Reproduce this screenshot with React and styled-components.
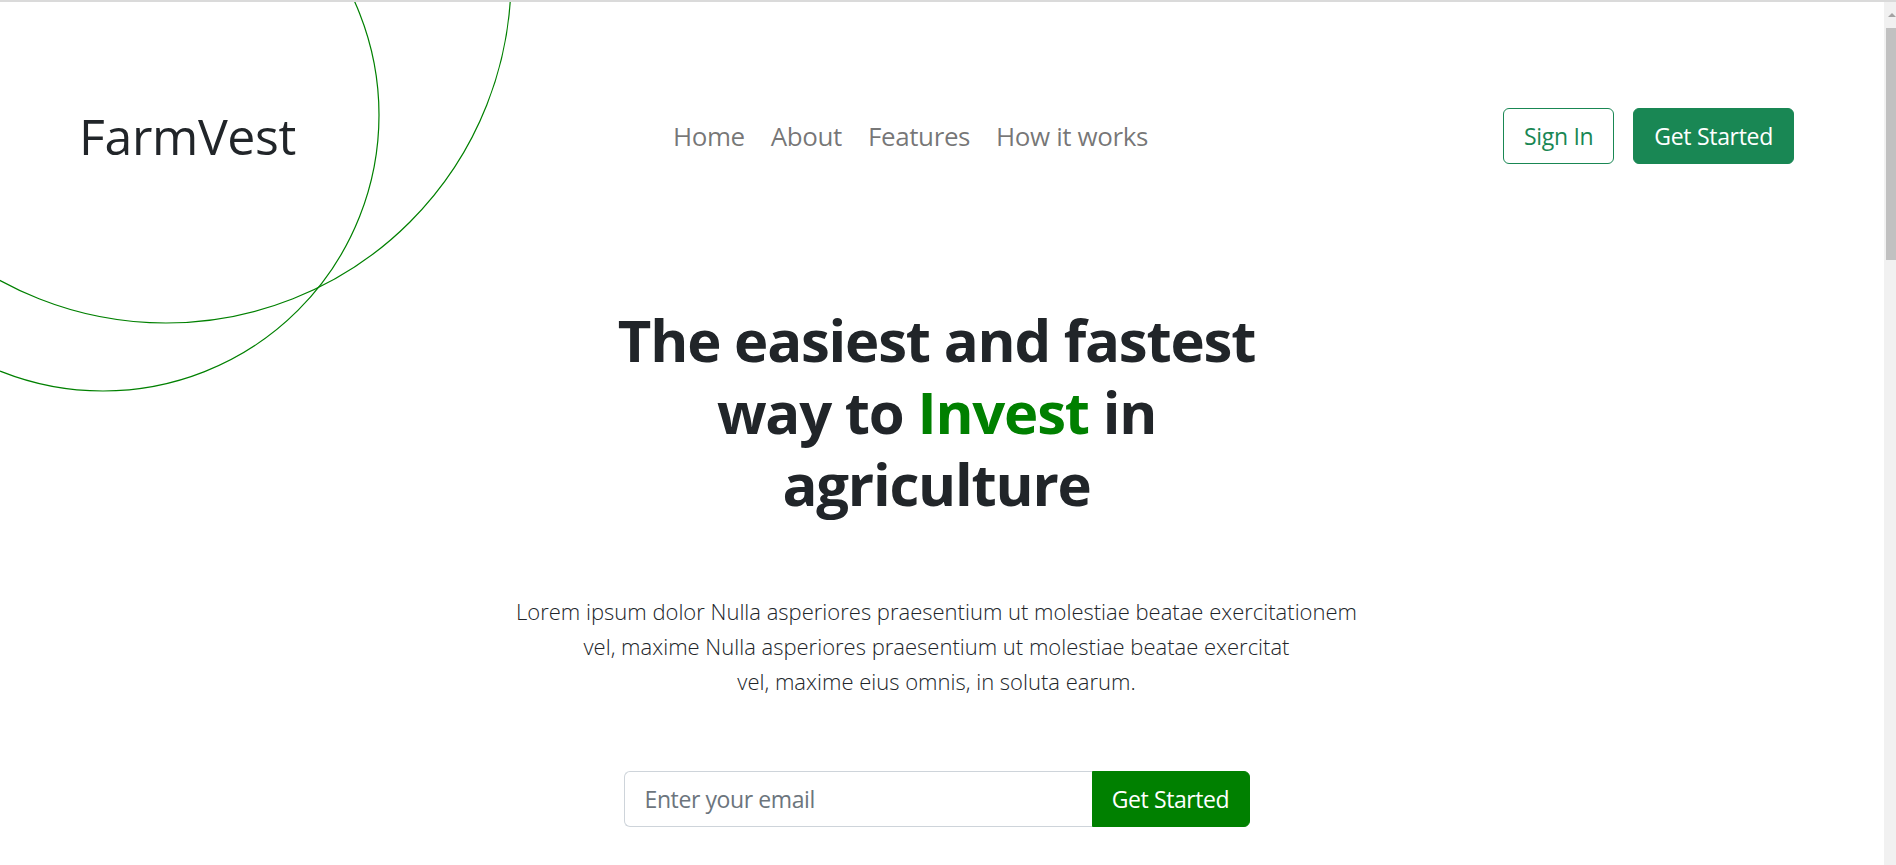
import React from 'react';
import styled, { createGlobalStyle } from 'styled-components';

const GlobalStyle = createGlobalStyle`
  * { box-sizing: border-box; }
  html, body { margin: 0; padding: 0; }
  body {
    background: #fff;
    border-top: 2px solid #dadada;
    font-family: 'Open Sans', 'Noto Sans', sans-serif;
    color: #212529;
  }
`;

const Page = styled.div`
  position: relative;
  width: calc(100% - 12px);
  min-height: 3100px;
  overflow: hidden;
`;

// stand-in for the browser's classic scrollbar
const ScrollTrack = styled.div`
  position: fixed;
  top: 2px;
  right: 0;
  bottom: 0;
  width: 12px;
  background: #f1f1f1;
  z-index: 5;
`;

const ScrollArrow = styled.div`
  width: 0;
  height: 0;
  margin: 11px 0 0 4px;
  border-left: 4px solid transparent;
  border-right: 4px solid transparent;
  border-bottom: 4px solid #a3a3a3;
`;

const ScrollThumb = styled.div`
  height: 232px;
  margin: 11px 0 0 2px;
  background: #c1c1c1;
`;

const Rings = styled.svg`
  position: absolute;
  top: 0;
  left: 0;
  width: 640px;
  height: 480px;
  pointer-events: none;
  z-index: 0;
`;

const Header = styled.header`
  position: relative;
  z-index: 1;
  display: flex;
  align-items: center;
  height: 60px;
  margin-top: 104px;
  padding: 0 90px 0 79px;
`;

const Logo = styled.a`
  font-size: 50px;
  line-height: 60px;
  font-weight: 400;
  letter-spacing: -0.35px;
  color: #212529;
  text-decoration: none;
  margin-right: 22px;
`;

const Nav = styled.nav`
  display: flex;
  margin: 0 auto;
`;

const NavLink = styled.a`
  padding: 0 13px;
  font-size: 26px;
  letter-spacing: -0.4px;
  line-height: 40px;
  color: rgba(0, 0, 0, 0.55);
  text-decoration: none;
`;

const Actions = styled.div`
  display: flex;
  gap: 19px;
`;

const Button = styled.button`
  height: 56px;
  padding: 0 20px;
  font-family: inherit;
  font-size: 23px;
  letter-spacing: -0.3px;
  border-radius: 6px;
  border: 1px solid #198754;
  background: ${(p) => (p.$solid ? '#198754' : '#fff')};
  color: ${(p) => (p.$solid ? '#fff' : '#198754')};
  cursor: pointer;
`;

const Hero = styled.section`
  position: relative;
  z-index: 1;
  text-align: center;
  padding: 138px 11px 0 0;
`;

const Title = styled.h1`
  margin: 0;
  font-size: 58px;
  font-weight: 700;
  letter-spacing: -1.2px;
  line-height: 72px;
  color: #212529;
`;

const Accent = styled.span`
  color: #008000;
`;

const Lead = styled.p`
  margin: 74px 0 0;
  font-size: 22px;
  font-weight: 300;
  line-height: 35px;
  color: #212529;
`;

const Form = styled.form`
  display: flex;
  width: 626px;
  margin: 72px auto 0;
`;

const EmailInput = styled.input`
  flex: 1;
  height: 56px;
  padding: 0 20px;
  font-family: inherit;
  font-size: 23px;
  letter-spacing: -0.4px;
  color: #212529;
  border: 1px solid #ced4da;
  border-right: none;
  border-radius: 6px 0 0 6px;
  outline: none;

  &::placeholder {
    color: #6c757d;
  }
`;

const SubmitButton = styled.button`
  width: 158px;
  height: 56px;
  font-family: inherit;
  font-size: 23px;
  letter-spacing: -0.4px;
  color: #fff;
  background: #008000;
  border: 1px solid #008000;
  border-radius: 0 6px 6px 0;
  cursor: pointer;
`;

export default function App() {
  return (
    <Page>
      <GlobalStyle />
      <Rings viewBox="0 0 640 480" fill="none" stroke="#008000" strokeWidth="1.2">
        <circle cx="103" cy="113" r="276" />
        <circle cx="166" cy="-24" r="345" />
      </Rings>

      <Header>
        <Logo href="#">FarmVest</Logo>
        <Nav>
          <NavLink href="#">Home</NavLink>
          <NavLink href="#">About</NavLink>
          <NavLink href="#">Features</NavLink>
          <NavLink href="#">How it works</NavLink>
        </Nav>
        <Actions>
          <Button>Sign In</Button>
          <Button $solid>Get Started</Button>
        </Actions>
      </Header>

      <Hero>
        <Title>
          The easiest and fastest
          <br />
          way to <Accent>Invest</Accent> in
          <br />
          agriculture
        </Title>
        <Lead>
          Lorem ipsum dolor Nulla asperiores praesentium ut molestiae beatae exercitationem
          <br />
          vel, maxime Nulla asperiores praesentium ut molestiae beatae exercitat
          <br />
          vel, maxime eius omnis, in soluta earum.
        </Lead>
        <Form onSubmit={(e) => e.preventDefault()}>
          <EmailInput type="email" placeholder="Enter your email" />
          <SubmitButton type="submit">Get Started</SubmitButton>
        </Form>
      </Hero>

      <ScrollTrack>
        <ScrollArrow />
        <ScrollThumb />
      </ScrollTrack>
    </Page>
  );
}
